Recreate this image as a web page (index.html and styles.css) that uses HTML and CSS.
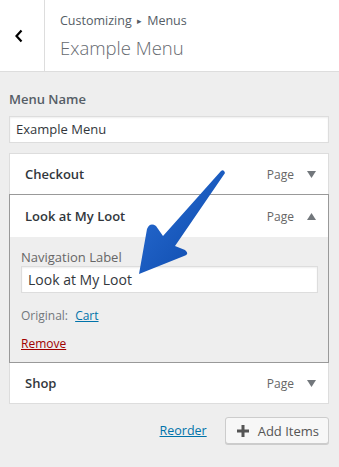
FILE: index.html
```html
<!DOCTYPE html>
<html lang="en">
<head>
    <meta charset="UTF-8">
    <meta name="viewport" content="width=device-width, initial-scale=1.0">
    <title>Customizing - Menus</title>
    <link rel="stylesheet" href="styles.css">
</head>
<body>
    <div class="panel">
        <div class="panel-header">
            <div class="back-btn">
                <svg width="10" height="14" viewBox="0 0 10 14"><polyline points="7.5,1.5 2.5,7 7.5,12.5" fill="none" stroke="#000" stroke-width="2.2"/></svg>
            </div>
            <div class="header-titles">
                <div class="crumbs">Customizing <span class="crumb-sep">&#9656;</span> Menus</div>
                <div class="panel-title">Example Menu</div>
            </div>
        </div>

        <div class="panel-body">
            <label class="field-label">Menu Name</label>
            <div class="text-input">Example Menu</div>

            <ul class="menu-items">
                <li class="menu-item">
                    <div class="item-bar">
                        <span class="item-title">Checkout</span>
                        <span class="item-type">Page</span>
                        <svg class="toggle" width="9" height="7" viewBox="0 0 9 7"><polygon points="0,0 9,0 4.5,7" /></svg>
                    </div>
                </li>
                <li class="menu-item open">
                    <div class="item-bar">
                        <span class="item-title">Look at My Loot</span>
                        <span class="item-type">Page</span>
                        <svg class="toggle" width="9" height="7" viewBox="0 0 9 7"><polygon points="0,7 9,7 4.5,0" /></svg>
                    </div>
                    <div class="item-settings">
                        <label class="nav-label">Navigation Label</label>
                        <div class="text-input large">Look at My Loot</div>
                        <div class="original">Original: <a href="#">Cart</a></div>
                        <a class="remove" href="#">Remove</a>
                    </div>
                </li>
                <li class="menu-item">
                    <div class="item-bar">
                        <span class="item-title">Shop</span>
                        <span class="item-type">Page</span>
                        <svg class="toggle" width="9" height="7" viewBox="0 0 9 7"><polygon points="0,0 9,0 4.5,7" /></svg>
                    </div>
                </li>
            </ul>

            <div class="actions">
                <a class="reorder" href="#">Reorder</a>
                <button class="add-items">
                    <svg width="12" height="12" viewBox="0 0 12 12"><rect x="4.5" y="0" width="3" height="12" /><rect x="0" y="4.5" width="12" height="3" /></svg>
                    Add Items
                </button>
            </div>
        </div>
    </div>

    <!-- annotation arrow -->
    <svg class="pointer-arrow" width="339" height="467" viewBox="0 0 339 467">
        <defs>
            <linearGradient id="arrowFill" x1="0" y1="0" x2="1" y2="1">
                <stop offset="0" stop-color="#2a6fd6"/>
                <stop offset="1" stop-color="#0b47a8"/>
            </linearGradient>
        </defs>
        <path d="M225,173 L175,246 L185,250 Q190,254 184,256 L139,274 L147,229 Q150,222 156,226 L163,236 L221,171 Q224,169 225,173 Z" fill="url(#arrowFill)"/>
    </svg>
</body>
</html>
```

FILE: styles.css
```css
* {
    margin: 0;
    padding: 0;
    box-sizing: border-box;
}

body {
    font-family: 'Open Sans', 'Noto Sans', sans-serif;
    background: #eeeeee;
    color: #23282d;
    width: 339px;
    height: 467px;
    overflow: hidden;
    position: relative;
}

.panel-header {
    display: flex;
    height: 72px;
    background: #ffffff;
    border-bottom: 1px solid #dddddd;
}

.back-btn {
    width: 45px;
    border-right: 1px solid #dddddd;
    display: flex;
    align-items: center;
    justify-content: center;
    padding-right: 6px;
}

.header-titles {
    padding: 11px 0 0 15px;
}

.crumbs {
    font-size: 12.5px;
    color: #555d66;
    line-height: 20px;
}

.crumb-sep {
    font-size: 9px;
    margin: 0 2px;
    position: relative;
    top: -1px;
}

.panel-title {
    font-size: 18.5px;
    font-weight: 300;
    color: #666a70;
    line-height: 28px;
    margin-top: 2px;
}

.panel-body {
    padding: 18px 10px 0 9px;
}

.field-label {
    display: block;
    font-size: 13px;
    font-weight: 600;
    color: #555d66;
    line-height: 18px;
    margin-bottom: 8px;
}

.text-input {
    background: #ffffff;
    border: 1px solid #dddddd;
    height: 27px;
    font-size: 13px;
    line-height: 25px;
    padding: 0 6px;
    color: #32373c;
    box-shadow: inset 0 1px 2px rgba(0, 0, 0, 0.07);
}

.text-input.large {
    font-size: 14px;
}

.menu-items {
    list-style: none;
    margin-top: 11px;
}

.menu-item {
    background: #ffffff;
    border: 1px solid #dddddd;
    margin-top: -1px;
}

.menu-item.open {
    border-color: #999999;
    position: relative;
}

.item-bar {
    display: flex;
    align-items: center;
    height: 40px;
    padding: 0 12px 0 15px;
}

.menu-item.open .item-bar {
    height: 42px;
}

.item-title {
    flex: 1;
    font-size: 13px;
    font-weight: 600;
    color: #32373c;
}

.item-type {
    font-size: 12px;
    color: #666666;
    margin-right: 13px;
}

.toggle {
    fill: #72777c;
}

.item-settings {
    background: #eeeeee;
    padding: 12px 10px 0 11px;
    height: 125px;
}

.nav-label {
    display: block;
    font-size: 13px;
    color: #666666;
    line-height: 16px;
    margin-bottom: 1px;
}

.original {
    margin-top: 14px;
    font-size: 12px;
    color: #72777c;
}

.original a {
    color: #0073aa;
    margin-left: 4px;
}

.remove {
    display: inline-block;
    margin-top: 11px;
    font-size: 12px;
    color: #a00000;
}

.actions {
    display: flex;
    justify-content: flex-end;
    align-items: center;
    margin-top: 13px;
}

.reorder {
    font-size: 12.5px;
    color: #0073aa;
    margin-right: 18px;
}

.add-items {
    display: flex;
    align-items: center;
    gap: 9px;
    height: 27px;
    padding: 0 9px 0 11px;
    background: #f7f7f7;
    border: 1px solid #cccccc;
    border-radius: 3px;
    box-shadow: 0 1px 0 #cccccc;
    font-family: inherit;
    font-size: 13px;
    color: #555555;
}

.add-items svg {
    fill: #555555;
}

.pointer-arrow {
    position: absolute;
    top: 0;
    left: 0;
    pointer-events: none;
}
```
